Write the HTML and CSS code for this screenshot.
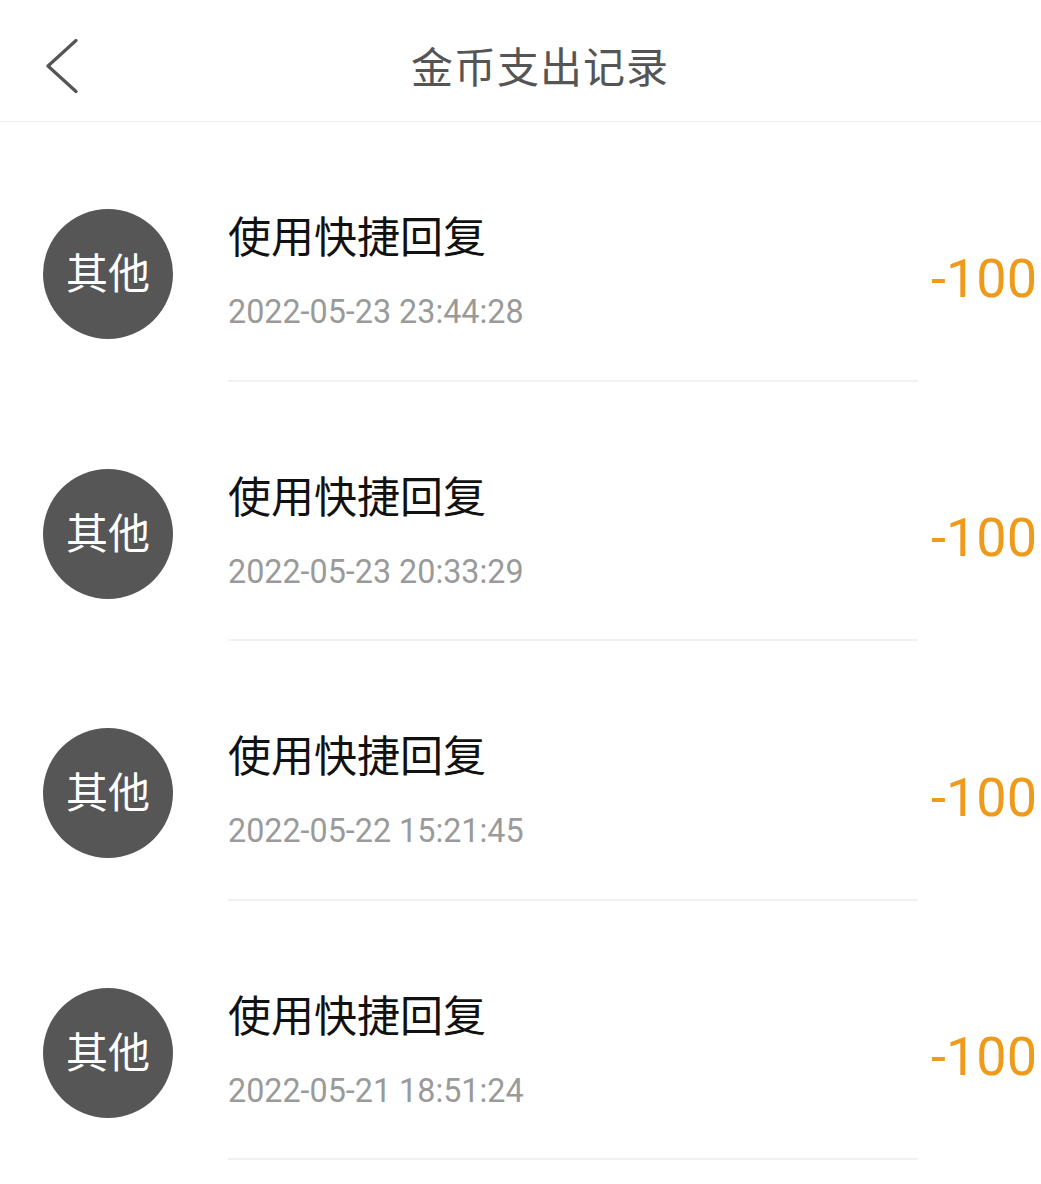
FILE: index.html
```html
<!DOCTYPE html>
<html lang="zh-CN">
<head>
<meta charset="utf-8">
<title>金币支出记录</title>
<link rel="stylesheet" href="styles.css">
</head>
<body>
<header class="topbar">
  <span class="back">
    <svg width="32" height="56" viewBox="0 0 32 56"><polyline points="30,1.5 2,27 30,52.5" fill="none" stroke="#555" stroke-width="3.2" stroke-linecap="round" stroke-linejoin="round"/></svg>
  </span>
  <h1 class="title">金币支出记录</h1>
</header>
<main class="list">
  <div class="item">
    <div class="avatar">其他</div>
    <div class="body">
      <div class="name">使用快捷回复</div>
      <div class="time">2022-05-23 23:44:28</div>
    </div>
    <div class="amount">-100</div>
  </div>
  <div class="item">
    <div class="avatar">其他</div>
    <div class="body">
      <div class="name">使用快捷回复</div>
      <div class="time">2022-05-23 20:33:29</div>
    </div>
    <div class="amount">-100</div>
  </div>
  <div class="item">
    <div class="avatar">其他</div>
    <div class="body">
      <div class="name">使用快捷回复</div>
      <div class="time">2022-05-22 15:21:45</div>
    </div>
    <div class="amount">-100</div>
  </div>
  <div class="item">
    <div class="avatar">其他</div>
    <div class="body">
      <div class="name">使用快捷回复</div>
      <div class="time">2022-05-21 18:51:24</div>
    </div>
    <div class="amount">-100</div>
  </div>
</main>
</body>
</html>
```
FILE: styles.css
```css
* { box-sizing: border-box; }
html, body { margin: 0; padding: 0; background: #fff; }
body {
  font-family: Roboto, "Noto Sans CJK SC", sans-serif;
  overflow: hidden;
}
.topbar {
  height: 122px;
  border-bottom: 1px solid #ececec;
  display: flex;
  align-items: flex-start;
}
.back {
  display: block;
  margin-left: 46px;
  margin-top: 39px;
  width: 32px;
  height: 56px;
}
.back svg { display: block; }
.title {
  margin: 44px 0 0 333px;
  font-family: "Noto Sans CJK SC", sans-serif;
  font-weight: 400;
  font-size: 42px;
  line-height: 42px;
  color: #555;
  letter-spacing: 1px;
}
.list { display: flex; flex-direction: column; }
.item {
  height: 259.5px;
  display: flex;
  align-items: flex-start;
  padding-left: 43px;
}
.avatar {
  flex: 0 0 130px;
  height: 130px;
  margin-top: 87px;
  margin-right: 55px;
  border-radius: 50%;
  background: #565656;
  color: #fff;
  font-family: "Noto Sans CJK SC", sans-serif;
  font-size: 42px;
  line-height: 124px;
  text-align: center;
}
.body {
  flex: 0 0 690px;
  height: 100%;
  padding-top: 91px;
  border-bottom: 2px solid #f1f1f1;
}
.name {
  font-family: "Noto Sans CJK SC", sans-serif;
  font-size: 43px;
  line-height: 43px;
  color: #111;
}
.time {
  margin-top: 40px;
  font-family: Roboto, sans-serif;
  font-size: 32.3px;
  line-height: 32px;
  color: #9a9a9a;
}
.amount {
  flex: 1;
  margin-top: 129.5px;
  padding-right: 4px;
  text-align: right;
  font-family: Roboto, sans-serif;
  font-size: 54px;
  line-height: 54px;
  color: #ee9a1b;
  white-space: nowrap;
}
```
